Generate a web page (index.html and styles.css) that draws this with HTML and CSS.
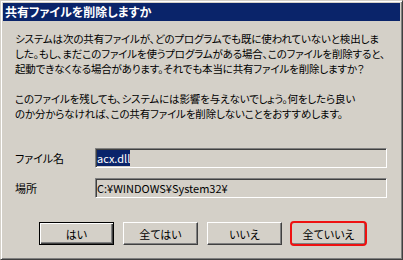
FILE: index.html
```html
<!DOCTYPE html>
<html lang="ja">
<head>
<meta charset="utf-8">
<title>共有ファイルを削除しますか</title>
<link rel="stylesheet" href="styles.css">
</head>
<body>
<div class="window">
  <div class="titlebar">共有ファイルを削除しますか</div>
  <div class="content">
    <p class="msg">システムは次の共有ファイルが、どのプログラムでも既に使われていないと検出しま<br>した。もし、まだこのファイルを使うプログラムがある場合、このファイルを削除すると、<br>起動できなくなる場合があります。それでも本当に共有ファイルを削除しますか？</p>
    <p class="msg msg2">このファイルを残しても、システムには影響を与えないでしょう。何をしたら良い<br>のか分からなければ、この共有ファイルを削除しないことをおすすめします。</p>
    <div class="fields">
      <div class="label">ファイル名</div>
      <div class="field"><span class="sel">acx.dll</span></div>
      <div class="label">場所</div>
      <div class="field">C:¥WINDOWS¥System32¥</div>
    </div>
    <div class="buttons">
      <button class="btn default">はい</button>
      <button class="btn">全てはい</button>
      <button class="btn">いいえ</button>
      <span class="mark"><button class="btn">全ていいえ</button></span>
    </div>
  </div>
</div>
</body>
</html>
```

FILE: styles.css
```css
html, body {
  margin: 0;
  padding: 0;
  background: #d4d0c8;
}
.window {
  width: 403px;
  height: 260px;
  box-sizing: border-box;
  background: #d4d0c8;
  border: 1px solid;
  border-color: #d4d0c8 #404040 #404040 #d4d0c8;
  box-shadow: inset 1px 1px 0 #ffffff, inset -1px -1px 0 #808080;
  padding: 2px;
  font-family: "Noto Sans CJK JP", sans-serif;
  color: #000;
  display: flex;
  flex-direction: column;
}
.titlebar {
  height: 18px;
  background: #0a246a;
  color: #fff;
  font-weight: bold;
  font-size: 12px;
  line-height: 18px;
  padding-left: 2px;
  font-feature-settings: "palt";
  white-space: nowrap;
}
.content {
  padding: 10px 0 0 12px;
  display: flex;
  flex-direction: column;
}
.msg {
  margin: 0;
  font-size: 10.5px;
  line-height: 15px;
  letter-spacing: -0.15px;
  white-space: nowrap;
  font-feature-settings: "palt";
}
.msg2 {
  margin-top: 15px;
}
.fields {
  margin-top: 27px;
  display: grid;
  grid-template-columns: 80px 292px;
  row-gap: 10px;
  align-items: center;
}
.label {
  font-size: 11px;
  font-feature-settings: "palt";
}
.field {
  height: 20px;
  box-sizing: border-box;
  border: 1px solid;
  border-color: #808080 #ffffff #ffffff #808080;
  box-shadow: inset 1px 1px 0 #404040, inset -1px -1px 0 #d4d0c8;
  padding: 0 0 0 1px;
  font-size: 11px;
  line-height: 18px;
  white-space: nowrap;
}
.sel {
  background: #0a246a;
  color: #fff;
}
.buttons {
  margin-top: 24px;
  padding-left: 24px;
  display: flex;
  gap: 9px;
}
.btn {
  width: 75px;
  height: 23px;
  box-sizing: border-box;
  margin: 0;
  padding: 0;
  background: #d4d0c8;
  border: 1px solid;
  border-color: #ffffff #404040 #404040 #ffffff;
  box-shadow: inset -1px -1px 0 #808080, inset 1px 1px 0 #d4d0c8;
  font-family: "Noto Sans CJK JP", sans-serif;
  font-size: 11px;
  color: #000;
  font-feature-settings: "palt";
}
.btn.default {
  border: 1px solid #000;
  box-shadow: inset 1px 1px 0 #ffffff, inset -1px -1px 0 #404040, inset -2px -2px 0 #808080;
}
.mark {
  position: relative;
  display: flex;
}
.mark::after {
  content: "";
  position: absolute;
  left: -1px;
  top: -1px;
  right: -1px;
  bottom: -1px;
  border: 2px solid #ee1111;
  border-radius: 4px;
}
```
